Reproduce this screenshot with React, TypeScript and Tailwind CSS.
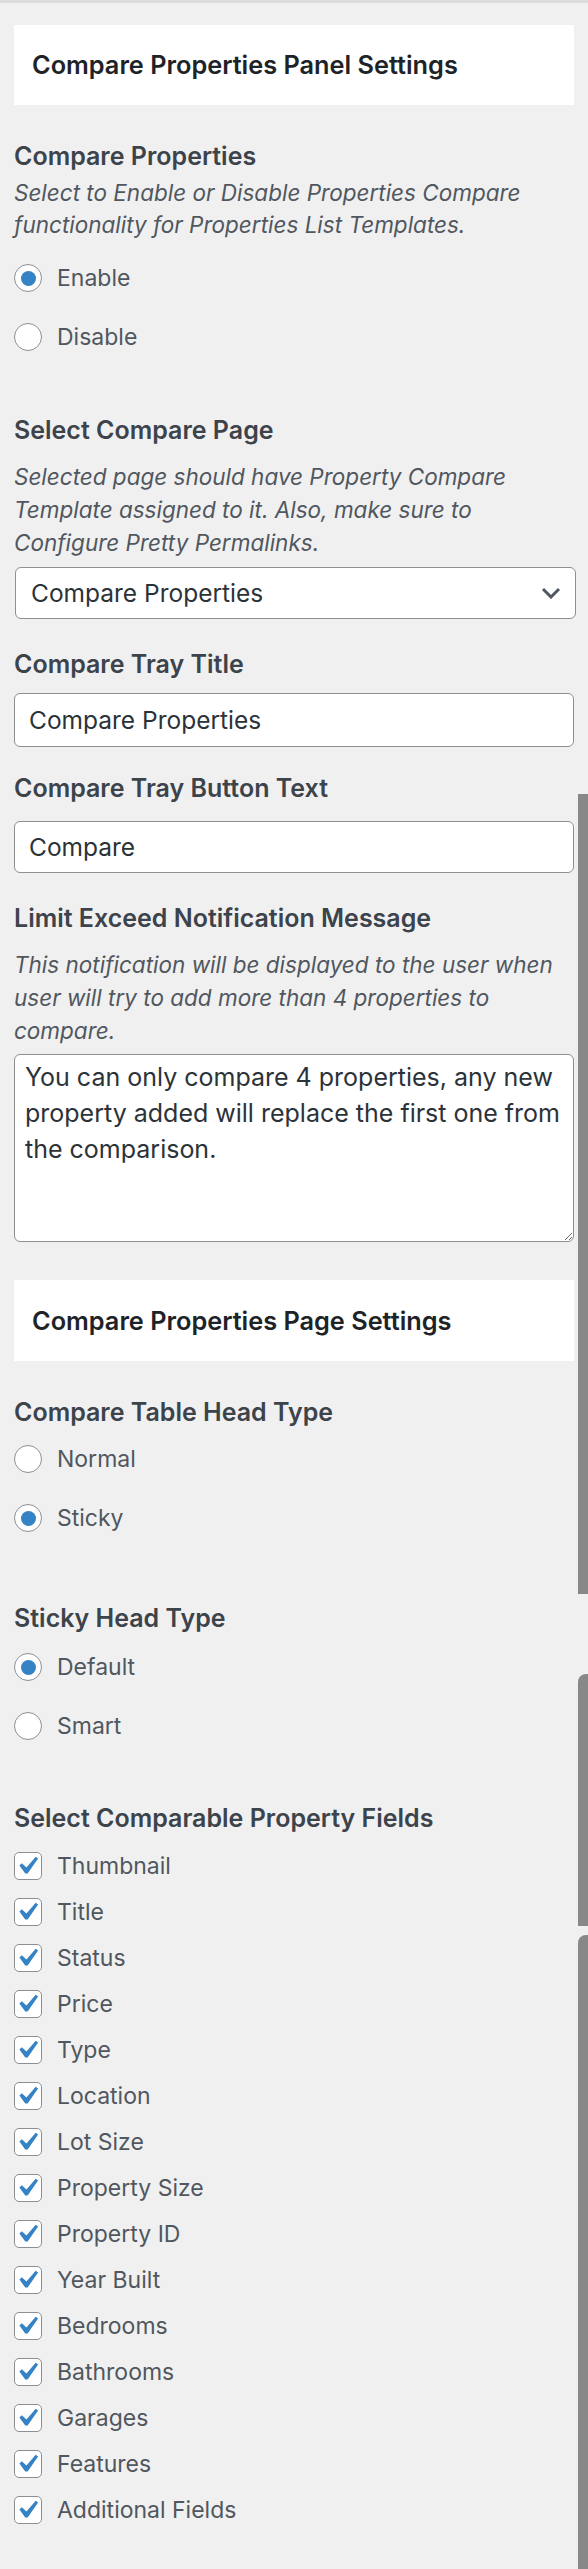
import React from "react";

const comparableFields = [
  "Thumbnail",
  "Title",
  "Status",
  "Price",
  "Type",
  "Location",
  "Lot Size",
  "Property Size",
  "Property ID",
  "Year Built",
  "Bedrooms",
  "Bathrooms",
  "Garages",
  "Features",
  "Additional Fields",
];

type BoxProps = {
  className?: string;
};

function SectionHeader({ title, className = "" }: BoxProps & { title: string }) {
  return (
    <div className={`flex h-[80px] items-center bg-white px-[18px] ${className}`}>
      <h2 className="text-[25.3px] font-semibold text-[#1d2327]">{title}</h2>
    </div>
  );
}

function FieldLabel({ text, className = "" }: BoxProps & { text: string }) {
  return <h3 className={`text-[25px] font-semibold leading-[32px] text-[#3c434a] ${className}`}>{text}</h3>;
}

function Description({ children, className = "" }: BoxProps & { children: React.ReactNode }) {
  return <p className={`text-[22.5px] italic text-[#50575e] ${className}`}>{children}</p>;
}

function Radio({ label, checked = false, className = "" }: BoxProps & { label: string; checked?: boolean }) {
  return (
    <label className={`flex h-[28px] items-center gap-[15px] ${className}`}>
      <span className="flex h-[28px] w-[28px] shrink-0 items-center justify-center rounded-full border border-[#8c8f94] bg-white">
        {checked && <span className="h-[15px] w-[15px] rounded-full bg-[#3582c4]" />}
      </span>
      <span className="text-[23px] leading-none text-[#50575e]">{label}</span>
    </label>
  );
}

function Checkbox({ label }: { label: string }) {
  return (
    <label className="flex h-[28px] items-center gap-[15px]">
      <span className="relative h-[28px] w-[28px] shrink-0 rounded-[5px] border border-[#8c8f94] bg-white">
        <svg viewBox="0 0 20 20" className="absolute -left-[6px] -top-[5px] h-[36px] w-[36px]">
          <path d="M14.83 4.89l1.34.94-5.81 8.38H9.02L5.78 9.67l1.34-1.25 2.57 2.4z" fill="#3582c4" />
        </svg>
      </span>
      <span className="text-[23px] leading-none text-[#50575e]">{label}</span>
    </label>
  );
}

function TextInput({ value, className = "" }: BoxProps & { value: string }) {
  return (
    <input
      type="text"
      readOnly
      value={value}
      className={`block w-full rounded-[6px] border border-[#8c8f94] bg-white px-[14px] text-[24.5px] text-[#2c3338] outline-none ${className}`}
    />
  );
}

export default function App() {
  return (
    <div className="relative min-h-[2569px] w-[588px] border-t-[3px] border-[#dcdcde] bg-[#f0f0f1] px-[14px] pb-[45px] font-[Inter,sans-serif]">
      <SectionHeader title="Compare Properties Panel Settings" className="mt-[22px]" />

      <FieldLabel text="Compare Properties" className="mt-[35px]" />
      <Description className="mt-[5px] leading-[32px]">
        Select to Enable or Disable Properties Compare functionality for Properties List Templates.
      </Description>
      <Radio label="Enable" checked className="mt-[23px]" />
      <Radio label="Disable" className="mt-[31px]" />

      <FieldLabel text="Select Compare Page" className="mt-[63px]" />
      <Description className="mt-[14px] leading-[33px]">
        Selected page should have Property Compare Template assigned to it. Also, make sure to Configure Pretty
        Permalinks.
      </Description>
      <div className="ml-[1px] mt-[8px] flex h-[52px] w-[561px] items-center justify-between rounded-[6px] border border-[#8c8f94] bg-white pl-[15px] pr-[14px]">
        <span className="text-[24.5px] text-[#2c3338]">Compare Properties</span>
        <svg viewBox="0 0 20 12" className="h-[12px] w-[20px]">
          <path d="M2 2l8 8 8-8" fill="none" stroke="#50575e" strokeWidth="3" />
        </svg>
      </div>

      <FieldLabel text="Compare Tray Title" className="mt-[29px]" />
      <TextInput value="Compare Properties" className="mt-[13px] h-[54px]" />

      <FieldLabel text="Compare Tray Button Text" className="mt-[25px]" />
      <TextInput value="Compare" className="mt-[17px] h-[52px]" />

      <FieldLabel text="Limit Exceed Notification Message" className="mt-[29px]" />
      <Description className="mt-[14px] leading-[33px]">
        This notification will be displayed to the user when user will try to add more than 4 properties to
        compare.
      </Description>
      <textarea
        readOnly
        defaultValue="You can only compare 4 properties, any new property added will replace the first one from the comparison."
        className="mt-[7px] block h-[188px] w-full rounded-[6px] border border-[#8c8f94] bg-white pl-[10px] pr-[8px] pt-[4px] text-[25px] leading-[36px] text-[#2c3338] outline-none"
      />

      <SectionHeader title="Compare Properties Page Settings" className="mt-[38px] h-[81px]" />

      <FieldLabel text="Compare Table Head Type" className="mt-[35px]" />
      <Radio label="Normal" className="mt-[17px]" />
      <Radio label="Sticky" checked className="mt-[31px]" />

      <FieldLabel text="Sticky Head Type" className="mt-[70px]" />
      <Radio label="Default" checked className="mt-[19px]" />
      <Radio label="Smart" className="mt-[31px]" />

      <FieldLabel text="Select Comparable Property Fields" className="mt-[62px]" />
      <div className="mt-[18px] flex flex-col gap-[18px]">
        {comparableFields.map((field) => (
          <Checkbox key={field} label={field} />
        ))}
      </div>

      {/* scrollbar slices left over from the stitched capture */}
      <div className="absolute right-0 top-[791px] h-[800px] w-[10px] bg-[#888888]" />
      <div className="absolute right-0 top-[1671px] h-[252px] w-[10px] rounded-tl-[8px] bg-[#888888]" />
      <div className="absolute bottom-0 right-0 top-[1932px] w-[10px] rounded-tl-[8px] bg-[#888888]" />
    </div>
  );
}
